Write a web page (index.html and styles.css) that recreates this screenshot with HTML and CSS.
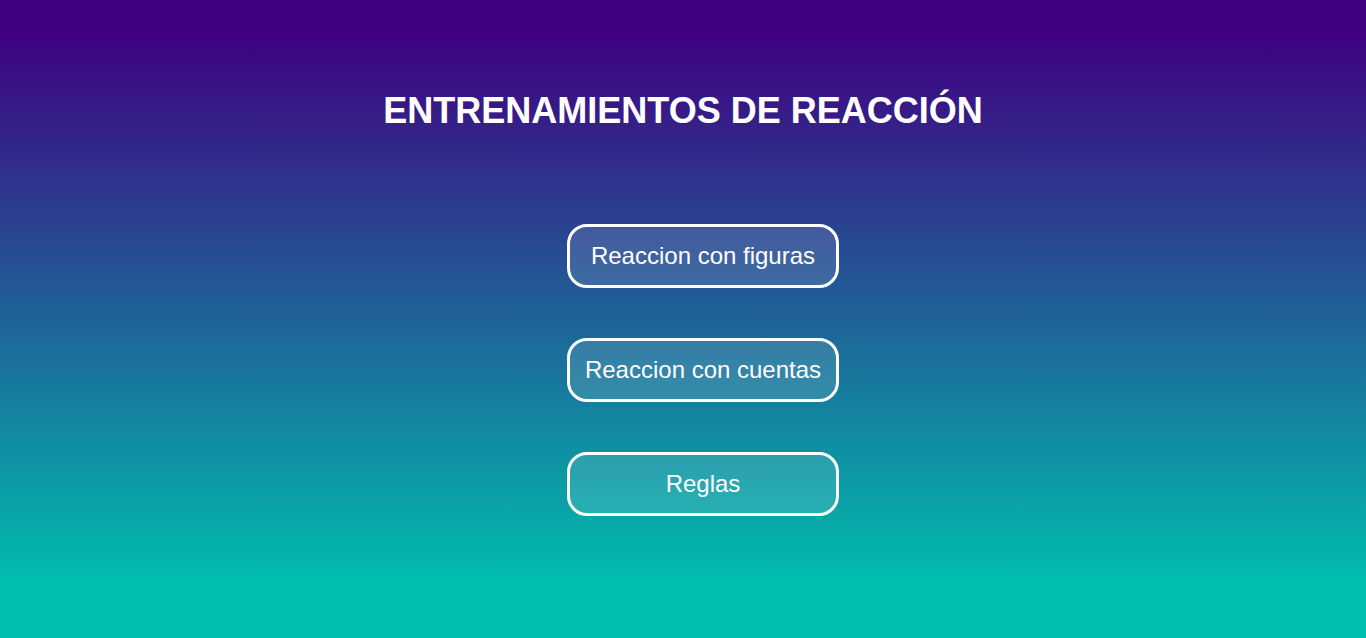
FILE: index.html
```html
<!DOCTYPE html>
<html lang="es">
<head>
<meta charset="utf-8">
<title>Entrenamientos de reacción</title>
<link rel="stylesheet" href="styles.css">
</head>
<body>
<main class="page">
  <h1 class="title">ENTRENAMIENTOS DE REACCIÓN</h1>
  <nav class="menu">
    <button class="btn">Reaccion con figuras</button>
    <button class="btn">Reaccion con cuentas</button>
    <button class="btn">Reglas</button>
  </nav>
</main>
</body>
</html>
```

FILE: styles.css
```css
html, body {
  margin: 0;
  height: 100%;
}
body {
  background: linear-gradient(to bottom, #3f0080 5%, #00bfae 92%);
  font-family: "Liberation Sans", Arial, sans-serif;
  color: #fff;
}
.page {
  display: flex;
  flex-direction: column;
  align-items: center;
  padding-top: 89px;
}
.title {
  margin: 0;
  font-size: 36px;
  font-weight: bold;
  line-height: 44px;
}
.menu {
  display: flex;
  flex-direction: column;
  align-items: center;
  gap: 50px;
  margin-top: 91px;
  padding-left: 40px;
}
.btn {
  width: 272px;
  height: 64px;
  border: 3px solid #fff;
  border-radius: 20px;
  background: rgba(255, 255, 255, 0.12);
  color: #fff;
  font-family: "Liberation Sans", Arial, sans-serif;
  font-size: 24px;
  padding: 0;
  cursor: pointer;
}
```
